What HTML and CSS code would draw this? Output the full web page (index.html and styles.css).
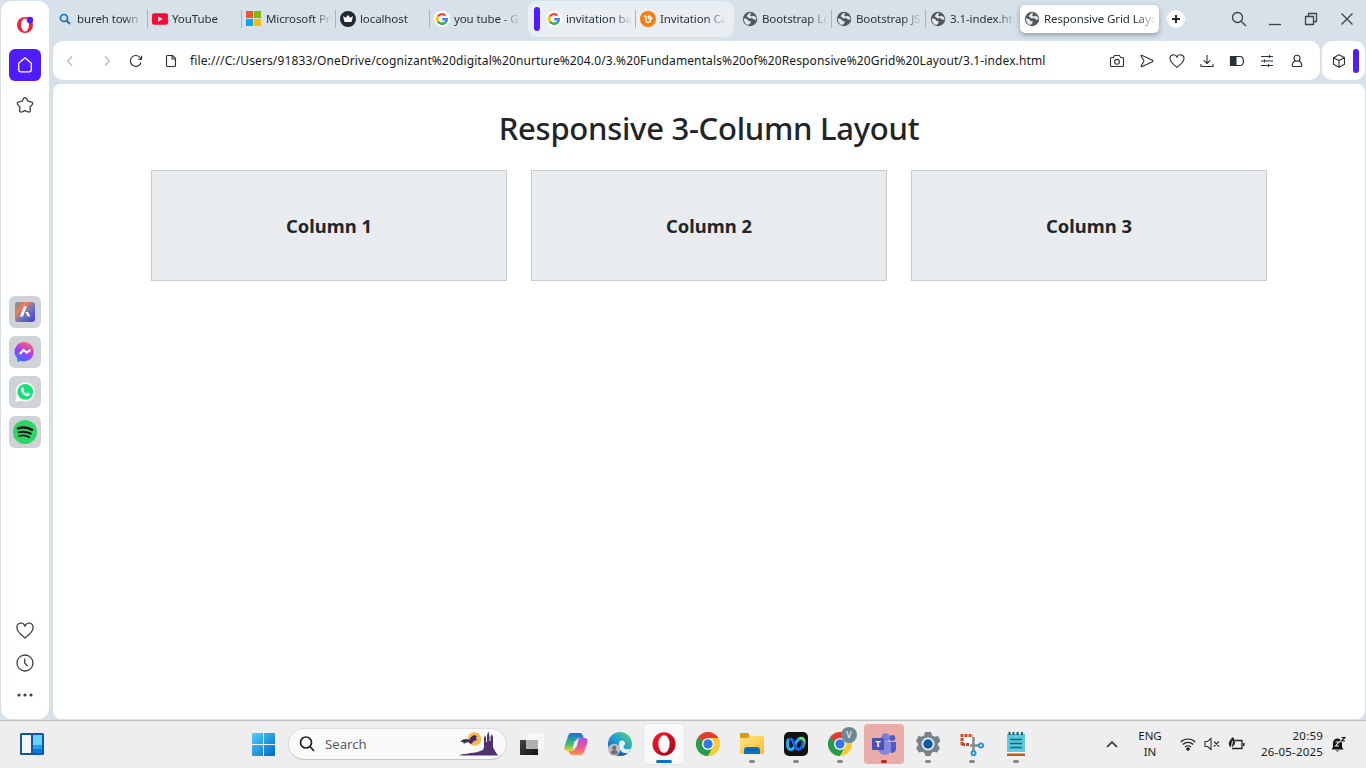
FILE: index.html
```html
<!DOCTYPE html>
<html lang="en">
<head>
<meta charset="utf-8">
<title>Responsive Grid Layout</title>
<link rel="stylesheet" href="styles.css">
</head>
<body>
<svg class="defs" aria-hidden="true">
  <defs>
    <linearGradient id="g-win" gradientUnits="userSpaceOnUse" x1="0" y1="0" x2="23" y2="23"><stop offset="0" stop-color="#4fd0fb"/><stop offset="1" stop-color="#0067c8"/></linearGradient>
    <linearGradient id="g-aria" x1="0" y1="0" x2="1" y2="1"><stop offset="0" stop-color="#5590b8"/><stop offset=".3" stop-color="#f27c55"/><stop offset=".6" stop-color="#6273c8"/><stop offset="1" stop-color="#5436c9"/></linearGradient>
    <linearGradient id="g-msg" x1="0.7" y1="0" x2="0.2" y2="1"><stop offset="0" stop-color="#ff6472"/><stop offset=".5" stop-color="#a63cf5"/><stop offset="1" stop-color="#1c80ff"/></linearGradient>
    <linearGradient id="g-opera" x1="0" y1="0" x2="1" y2="1"><stop offset="0" stop-color="#ff1b2d"/><stop offset="1" stop-color="#a70014"/></linearGradient>
    <linearGradient id="g-edge" x1="0" y1="1" x2="1" y2="0"><stop offset="0" stop-color="#0c59a4"/><stop offset=".5" stop-color="#1c9de0"/><stop offset="1" stop-color="#5fdc62"/></linearGradient>
    <linearGradient id="g-cop1" x1="0" y1="0" x2="0" y2="1"><stop offset="0" stop-color="#1670e8"/><stop offset=".6" stop-color="#3bbd72"/><stop offset="1" stop-color="#f3cf28"/></linearGradient>
    <linearGradient id="g-cop2" x1="0" y1="0" x2="0" y2="1"><stop offset="0" stop-color="#a850ec"/><stop offset=".6" stop-color="#f5568e"/><stop offset="1" stop-color="#fa9a4f"/></linearGradient>
    <linearGradient id="g-folder" x1="0" y1="0" x2="1" y2="1"><stop offset="0" stop-color="#ffe48a"/><stop offset="1" stop-color="#fbbd25"/></linearGradient>
    <linearGradient id="g-dark" x1="0" y1="0" x2="1" y2="1"><stop offset="0" stop-color="#444"/><stop offset="1" stop-color="#111"/></linearGradient>
    <symbol id="globe" viewBox="0 0 16 16"><circle cx="8" cy="8" r="7.2" fill="#55585b"/><path d="M1.8 7.2 5 8.1 6.5 10l2.2.3-.4 2.2-2.2 1.6C3.600 13.400 1.700 11 1.800 7.200zM7 2.200 9.300 1.800 8 4.200l1.600 1.200 2.200-.6 2.300 1.600.2 2.400-2.300-.4-2-1.300-2.400.4L6 6.200l-1.500-1z" fill="#e3eaef"/></symbol>
    <symbol id="google" viewBox="0 0 16 16"><circle cx="8" cy="8" r="8" fill="#fff"/><g fill="none" stroke-width="2.400"><path d="M3.900 5.400A4.900 4.900 0 0 1 11.500 4.500" stroke="#ea4335"/><path d="M3.900 5.400a4.900 4.900 0 0 0 0 5.200" stroke="#fbbc05"/><path d="M3.900 10.600a4.900 4.900 0 0 0 7.400.9" stroke="#34a853"/><path d="M11.300 11.500A4.900 4.900 0 0 0 12.900 8.200H8.200" stroke="#4285f4"/></g></symbol>
    <symbol id="chrome" viewBox="0 0 24 24"><path d="M12 12 1.600 6A12 12 0 0 1 22.400 6z" fill="#e33b2e"/><path d="M12 12 22.400 6A12 12 0 0 1 12 24z" fill="#fcc934"/><path d="M12 12v12A12 12 0 0 1 1.600 6z" fill="#259b4b"/><path d="M12 6h10.400L17 15z" fill="#fcc934"/><path d="M1.600 6 7 15.500 12 12z" fill="#259b4b"/><path d="M17.200 15 12 24 8 17z" fill="#259b4b"/><path d="M17.200 15 12 24l5.200-3z" fill="#fcc934"/><circle cx="12" cy="12" r="6" fill="#fff"/><circle cx="12" cy="12" r="4.700" fill="#3277e8"/></symbol>
  </defs>
</svg>

<div class="desktop">
  <div class="browser">
    <aside class="sidebar">
      <div class="side-item logo"><svg width="18" height="18" viewBox="0 0 18 18"><ellipse cx="9" cy="9" rx="8" ry="8" fill="#fa1e37"/><ellipse cx="9" cy="9" rx="4" ry="6.400" fill="#fff"/><circle cx="14" cy="4" r="3.200" fill="#4f1bff"/></svg></div>
      <div class="side-item home"><svg width="18" height="18" viewBox="0 0 18 18" class="line light"><path d="M2.700 7.200 9 1.800l6.300 5.400v6.600a2 2 0 0 1-2 2H4.700a2 2 0 0 1-2-2z"/></svg></div>
      <div class="side-item"><svg width="18" height="18" viewBox="0 0 18 18" class="line"><path d="M7.700 2.300q1.300-1.500 2.600 0l1.700 2.900 3.600.9q1.700.7.8 2.200L14.100 11l.3 3.600q-.1 1.700-1.900 1.500L9 14.600l-3.500 1.500q-1.800.2-1.900-1.500l.3-3.600-2.300-2.700q-.9-1.500.8-2.200l3.600-.9z"/></svg></div>
      <div class="side-apps">
        <div class="app"><svg width="20" height="20" viewBox="0 0 20 20"><rect width="20" height="20" rx="3" fill="url(#g-aria)"/><path d="M9 4.200h2.800L7.900 14.500H4.800zM10.500 10h2.600l2.200 4.500h-2.700z" fill="#fff"/></svg></div>
        <div class="app"><svg width="22" height="22" viewBox="0 0 22 22"><path d="M11 1a9.700 9.700 0 1 1-4.500 18.700L3.500 21.200l-.2-3.600A9.800 9.800 0 0 1 11 1z" fill="url(#g-msg)"/><path d="m5.800 13 3.700-4 3.200 2.600L16.300 8.800" fill="none" stroke="#fff" stroke-width="2.200"/></svg></div>
        <div class="app"><svg width="22" height="22" viewBox="0 0 22 22"><path d="M1.200 21 2.700 15.600A9.700 9.700 0 1 1 7 19.700z" fill="#fff"/><circle cx="11.300" cy="10.800" r="7.900" fill="#18e07a"/><path d="M7 7.200c.8-1.500 2-1.200 2.300-.2l.7 1.700-.8 1.100c.8 1.500 1.800 2.300 3.200 2.900l1.100-1.200 2.200 1.100c.4 1.900-1.400 2.800-2.900 2.500C9.500 14.300 6.700 11 7 7.200z" fill="#fff"/></svg></div>
        <div class="app"><svg width="24" height="24" viewBox="0 0 24 24"><circle cx="12" cy="12" r="12" fill="#2bd566"/><g fill="none" stroke="#111" stroke-linecap="round"><path d="M5 8.400c4.700-1.400 9.900-.9 14 1.400" stroke-width="2.500"/><path d="M5.700 12.300c4.200-1.200 8.600-.6 12 1.400" stroke-width="2"/><path d="M6.200 15.900c3.700-1 7.200-.5 10.100 1.300" stroke-width="1.700"/></g></svg></div>
      </div>
      <div class="side-foot">
        <svg width="18" height="18" viewBox="0 0 18 18" class="line"><path d="M9 16C5.500 13.200 1 10 1 6a4 4 0 0 1 8-1.700A4 4 0 0 1 17 6c0 4-4.500 7.200-8 10z"/></svg>
        <svg width="18" height="18" viewBox="0 0 18 18" class="line"><circle cx="9" cy="9" r="8"/><path d="M8.700 4.500V9l3 3"/></svg>
        <svg width="18" height="18" viewBox="0 0 18 18" fill="#3b444b"><circle cx="3" cy="9" r="1.600"/><circle cx="9" cy="9" r="1.600"/><circle cx="15" cy="9" r="1.600"/></svg>
      </div>
    </aside>

    <div class="main">
      <header class="tabs">
        <div class="tab first sep"><svg class="ico" viewBox="0 0 16 16" fill="none" stroke="#1570c9"><circle cx="7" cy="7" r="3.500" stroke-width="1.700"/><path d="m9.500 9.500 3.500 3.500" stroke-width="2"/></svg><span class="label">bureh town s</span></div>
        <div class="tab sep"><svg class="ico" viewBox="0 0 16 16"><rect y="2.300" width="16" height="11.500" rx="2" fill="#fb0a38"/><path d="m6.200 5.600 4.500 2.500-4.500 2.500z" fill="#fff"/></svg><span class="label">YouTube</span></div>
        <div class="tab sep"><svg class="ico" viewBox="0 0 16 16"><path fill="#f35426" d="M0 0h7v7H0z"/><path fill="#80bb04" d="M8 0h7v7H8z"/><path fill="#05a5f0" d="M0 8h7v7H0z"/><path fill="#ffba06" d="M8 8h7v7H8z"/></svg><span class="label">Microsoft Pr</span></div>
        <div class="tab sep"><svg class="ico" viewBox="0 0 16 16"><circle cx="8" cy="8" r="8" fill="#252533"/><path d="m3 5 2.800 1.800L8 4l2.200 2.800L13 5l-1.500 6h-7z" fill="#fff"/></svg><span class="label">localhost</span></div>
        <div class="tab wide"><svg class="ico"><use href="#google"/></svg><span class="label">you tube - G</span></div>
        <div class="tab-group">
          <i class="group-mark"></i>
          <div class="tab sep"><svg class="ico"><use href="#google"/></svg><span class="label">invitation ba</span></div>
          <div class="tab"><svg class="ico" viewBox="0 0 16 16"><circle cx="8" cy="8" r="8" fill="#fb7a08"/><path d="M4 5.500c1.500-1 2 0 2 1.500v2.500c0 3 4.500 3 4.800-1.500.2-3.500-2.600-4-2.600-2s2 2 4.300 1.300" fill="none" stroke="#fff" stroke-width="1.500"/></svg><span class="label">Invitation Ca</span></div>
        </div>
        <div class="tab sep"><svg class="ico"><use href="#globe"/></svg><span class="label">Bootstrap Lo</span></div>
        <div class="tab sep"><svg class="ico"><use href="#globe"/></svg><span class="label">Bootstrap JS</span></div>
        <div class="tab"><svg class="ico"><use href="#globe"/></svg><span class="label">3.1-index.htm</span></div>
        <div class="tab active"><svg class="ico"><use href="#globe"/></svg><span class="label">Responsive Grid Layou</span></div>
        <svg class="plus" width="18" height="18" viewBox="0 0 18 18"><circle cx="9" cy="9" r="9" fill="#fff"/><path d="M9 5v8M5 9h8" stroke="#222b33" stroke-width="2"/></svg>
        <div class="win-controls">
          <svg width="16" height="16" viewBox="0 0 16 16" class="line"><circle cx="6.500" cy="6.500" r="5"/><path d="m10.200 10.200 4.800 4.800"/></svg>
          <svg width="16" height="16" viewBox="0 0 16 16" class="line"><path d="M2 13.500h12"/></svg>
          <svg width="16" height="16" viewBox="0 0 16 16" class="line"><path d="M2.500 5.500h8v8h-8zM5.500 5.500v-3h8v8h-3"/></svg>
          <svg width="16" height="16" viewBox="0 0 16 16" class="line"><path d="m2.500 2.500 11 11m0-11-11 11"/></svg>
        </div>
      </header>

      <div class="toolbar">
        <div class="address">
          <svg class="t16 dim" viewBox="0 0 16 16"><path d="M10 3.500 5.500 8l4.500 4.500"/></svg>
          <svg class="t16 dim fwd" viewBox="0 0 16 16"><path d="m6 3.500 4.500 4.500L6 12.500"/></svg>
          <svg class="t16 reload" viewBox="0 0 16 16"><path d="M13 9.500A5.400 5.400 0 1 1 11.700 4.200L13.300 6M13.600 2.700v3.600H10"/></svg>
          <svg class="t16 file" viewBox="0 0 16 16"><path d="M3.500 3.500a1 1 0 0 1 1-1h5l3 3v7a1 1 0 0 1-1 1h-7a1 1 0 0 1-1-1zM9 2.500V6h3.500"/></svg>
          <span class="url">file:///C:/Users/91833/OneDrive/cognizant%20digital%20nurture%204.0/3.%20Fundamentals%20of%20Responsive%20Grid%20Layout/3.1-index.html</span>
          <div class="actions">
            <svg class="t16" viewBox="0 0 16 16"><path d="M2.500 4.500h2l1-2h5l1 2h2a1 1 0 0 1 1 1v7a1 1 0 0 1-1 1h-11a1 1 0 0 1-1-1v-7a1 1 0 0 1 1-1z"/><circle cx="8" cy="8.800" r="2.400"/></svg>
            <svg class="t16" viewBox="0 0 16 16"><path d="M2.200 3.300q-.3-1.200 1-.8L13.500 7.300q1 .7 0 1.400L3.200 13.500q-1.300.4-1-.8L5 8z"/></svg>
            <svg class="t16" viewBox="0 0 16 16"><path d="M8 14.300C5 11.800 1 9.300 1 5.500A3.600 3.600 0 0 1 8 4.200a3.600 3.600 0 0 1 7 1.300c0 3.800-4 6.300-7 8.800z"/></svg>
            <svg class="t16" viewBox="0 0 16 16"><path d="M8 2v8.500M4.800 7.300 8 10.500l3.200-3.200M2 11v2.500h12V11"/></svg>
            <svg class="t16" viewBox="0 0 16 16"><path d="M1.500 3.500H12q2.500 1 2.500 4.500T12 12.500H1.500z"/><path d="M1.500 3.500H7v9H1.500z" fill="#28323a"/></svg>
            <svg class="t16" viewBox="0 0 16 16"><path d="M2 3.500h12M2 8h12M2 12.500h12M10.500 2v3M5.500 6.500v3M9.500 11v3"/></svg>
            <svg class="t16" viewBox="0 0 16 16"><circle cx="8" cy="5.300" r="3"/><path d="M6 8C3.500 9 3.200 11 3.200 12.500q0 1 1 1h7.600q1 0 1-1C12.800 11 12.500 9 10 8"/></svg>
          </div>
        </div>
        <div class="extension">
          <svg class="t16" viewBox="0 0 16 16"><path d="M8 1.800 13.500 4.700v6.600L8 14.200l-5.500-2.900V4.700zM2.500 4.700 8 7.600l5.500-2.900M8 7.600v6.600"/></svg>
          <i class="group-mark"></i>
        </div>
      </div>

      <main class="page">
        <h1>Responsive 3-Column Layout</h1>
        <div class="columns">
          <div class="column">Column 1</div>
          <div class="column">Column 2</div>
          <div class="column">Column 3</div>
        </div>
      </main>
    </div>
  </div>

  <footer class="taskbar">
    <div class="widgets"><svg width="24" height="22" viewBox="0 0 24 22"><rect width="24" height="22" rx="1.500" fill="#1256a0"/><path fill="#f5f5f5" d="M2 2h9v18H2z"/><path fill="#65d3fb" d="M13 2h9v10h-9z"/><path fill="#239ff2" d="M13 12h9v4h-9z"/><path fill="#057be2" d="M13 16h9v4h-9z"/></svg></div>
    <div class="start"><svg width="23" height="23" viewBox="0 0 23 23" fill="url(#g-win)"><path d="M0 1q0-1 1-1h10v11H0zM12 0h10q1 0 1 1v10H12zM0 12h11v11H1q-1 0-1-1zM12 12h11v10q0 1-1 1H12z"/></svg></div>
    <div class="search">
      <svg width="16" height="16" viewBox="0 0 16 16" fill="none" stroke="#222" stroke-width="1.700"><circle cx="7" cy="6.500" r="5.500"/><path d="m11 10.500 4 4.500"/></svg>
      <span>Search</span>
      <svg class="castle" width="40" height="26" viewBox="0 0 40 26"><circle cx="15.500" cy="8" r="6.800" fill="#f9b950"/><path d="M1 11l3-2.500 4-.5 2 1 2-3 3-2 3 1-1 2 1 2-3 1-3 3-3-2-3 1-1 1-1-2z" fill="#442a64"/><path d="M0 24.500c3-2 7-1 11-2.500 5 0 8-1 13-3l1-3V7l1-3 1 3v4h1V5l1.200-5L30.500 5v5h1V6l1.500-3L34 6v10l2 4 3 4.500z" fill="#52316f"/></svg>
    </div>
    <div class="apps">
      <div class="task"><svg viewBox="0 0 24 24"><path d="M0 8h18v15H0z" fill="url(#g-dark)"/><path d="M6 2h18v15H6z" fill="#f8f8f8" opacity=".94"/><path d="M6 8h12v9H6z" fill="#b0b0b0"/></svg></div>
      <div class="task"><svg viewBox="0 0 24 24"><path d="M7.500 1h8.300c2 0 2.700 1.500 3.200 3l.8 2h-4.500c-2 0-2.500 1-3 3l-2 7c-.7 2.400-2 3-4.300 3H3.500C0 19 0 16 1 13L4 4c.7-2 1.500-3 3.500-3z" fill="url(#g-cop1)"/><path d="M16.500 23H8.200c-2 0-2.700-1.500-3.200-3l-.3-1h3c2 0 3-1 3.500-3l2-7c.7-2.400 2-3 4.300-3h3C24 6 24 9 23 12l-3 8c-.7 2-1.500 3-3.500 3z" fill="url(#g-cop2)"/><path d="m10.500 9.500 2-1.500h2l-2 7-2 1.500h-2z" fill="#eee"/></svg></div>
      <div class="task"><svg viewBox="0 0 24 24"><circle cx="12" cy="12" r="12" fill="url(#g-edge)"/><path d="M11 13c-1-5 5-6 6-2 .4 2-1.500 2-1.500 4 0 2.500 5 3 7.500 1.500L20 21c-5 1.500-9-3-9-8z" fill="#eef1f3"/><path d="M9 11c-2 6 3 12 11 10-5 4-10 3-13 1z" fill="#1260b2"/><circle cx="6.200" cy="17.800" r="6" fill="#c0c0c0"/><circle cx="6.200" cy="15.800" r="2.200" fill="#707070"/><path d="M2.500 21c0-4 7.400-4 7.400 0-2 2-5.400 2-7.400 0z" fill="#707070"/></svg></div>
      <div class="task current"><svg viewBox="0 0 24 24"><ellipse cx="12" cy="12" rx="11.500" ry="11.800" fill="url(#g-opera)"/><ellipse cx="12" cy="12" rx="5.700" ry="9" fill="#f8f8f8"/></svg></div>
      <div class="task"><svg><use href="#chrome"/></svg></div>
      <div class="task open"><svg viewBox="0 0 24 24"><path d="M0 2q0-1 1-1h7l2 3v4H0z" fill="#d99b09"/><path d="M0 6h8l2-2h14v18H0z" fill="url(#g-folder)"/><path d="M4 22v-4q0-3 3-3h10q3 0 3 3v4z" fill="#0a75c8"/><path d="M7 18h10" stroke="#0c5c9c" stroke-width="1.500"/></svg></div>
      <div class="task open"><svg viewBox="0 0 24 24"><rect width="24" height="24" rx="5" fill="#111"/><g fill="none" stroke-width="3" stroke-linecap="round"><path d="M15 6.800c5-2.500 6.500 3 3.500 8" stroke="#68df71"/><path d="M4 8c-1.500 6 0 9.500 3 9.500 4.500 0 4-9.500 8-10" stroke="#18b4f2"/><path d="M6.500 7c4 0 3 10.500 8 10.500 2.500 0 4.500-4 4.500-7" stroke="#1d62ee"/></g></svg></div>
      <div class="task open"><svg><use href="#chrome"/></svg><b class="badge">V</b></div>
      <div class="task open alert"><svg viewBox="0 0 24 24"><circle cx="13.500" cy="5.500" r="4.300" fill="#777fd9"/><circle cx="20.300" cy="6" r="3" fill="#525bc0"/><path d="M15 10h9v7c0 3-3 4-5 4z" fill="#5059c9"/><path d="M6 10h13v7c0 7-11 8-13 1z" fill="#8188dd"/><rect y="6" width="12" height="12" rx="1" fill="#4650b5"/><text x="6" y="15.300" text-anchor="middle" class="tee">T</text></svg></div>
      <div class="task open"><svg viewBox="0 0 24 24"><path d="M9 0h6l1 3.300 2.500 1.400L22 4l2.500 5-2.500 2.500v2L24 16l-3 4.500-3.500-.8-2 1.300-1 3h-5l-1-3-2-1.300-3.500.8L0 16l2-2.500v-2L0 9l2.500-5 3.300.7L8.200 3.300z" fill="#77838b"/><circle cx="12" cy="12" r="6.500" fill="#eceff1"/><circle cx="12" cy="12" r="4.700" fill="#105ba7"/></svg></div>
      <div class="task open"><svg viewBox="0 0 24 24"><path d="M4 2h12v11H4z" fill="#fff"/><path d="M2 13V3.500h11" fill="none" stroke="#d54720" stroke-width="3" stroke-dasharray="3 1"/><path d="M2 12.500h8" stroke="#d54720" stroke-width="3" stroke-dasharray="3 1"/><path d="M13.500 5v14M10 13.500h10" stroke="#858b90" stroke-width="2.600"/><g fill="#fff" stroke="#2099dc" stroke-width="2"><circle cx="21" cy="13.500" r="2"/><circle cx="13.500" cy="21.300" r="2"/></g></svg></div>
      <div class="task open"><svg viewBox="0 0 24 24"><path d="M3 2h18v19H3z" fill="#5bc9df"/><path d="M3 21h18v3H3z" fill="#bd5a17"/><path d="M3 20h18v1.500H3z" fill="#f7f7f7"/><path d="M6 7.500h12M6 11.500h12M6 15.500h12" stroke="#176b7d" stroke-width="1.500"/><path d="M5.500 0v3M9.500 0v3M13.500 0v3M18 0v3" stroke="#124f5c" stroke-width="1.800"/></svg></div>
    </div>
    <div class="tray">
      <svg class="up" width="12" height="8" viewBox="0 0 12 8" fill="none" stroke="#222" stroke-width="1.500"><path d="m1 7 5-5 5 5"/></svg>
      <div class="lang">ENG<br>IN</div>
      <div class="status">
        <svg width="16" height="14" viewBox="0 0 16 14" fill="none" stroke="#222" stroke-width="1.200"><path d="M.7 5a10.400 10.400 0 0 1 14.600 0M2.800 7.500a7.300 7.300 0 0 1 10.400 0M5 10a4.200 4.200 0 0 1 6 0"/><circle cx="8" cy="12" r="1.200" fill="#222"/></svg>
        <svg width="16" height="14" viewBox="0 0 16 14" fill="none" stroke="#333" stroke-width="1.100"><path d="M1 4.500h2.500L7 1.500v11L3.500 9.500H1zM10 4.500l5 5m0-5-5 5"/></svg>
        <svg width="17" height="14" viewBox="0 0 17 14"><path d="M7 3.500h7v8H4" fill="none" stroke="#222" stroke-width="1.300"/><path d="M15 6h1.500v3H15zM5 0c2 3 3 6 .5 9L3 10.500C-.5 8 0 4.500 5 0z" fill="#222"/><path d="M4.500 4 3 12" stroke="#eee"/></svg>
      </div>
      <div class="clock">20:59<br>26-05-2025</div>
      <svg class="bell" width="15" height="16" viewBox="0 0 15 16"><path d="M2 11V7c0-6 9-6 9 0v4l1.500 2.500H.5zM4.500 14.500h4q-2 2-4 0z" fill="#111"/><g fill="none" stroke-width="1.100"><path d="M4.500 6h3.500l-3.500 4h3.500" stroke="#eee"/><path d="M10.500 1.500H14l-3.500 3.500H14" stroke="#eee" stroke-width="2.500"/><path d="M10.500 1.500H14l-3.500 3.500H14" stroke="#111"/></g></svg>
    </div>
  </footer>
</div>
</body>
</html>
```
FILE: styles.css
```css
* { box-sizing: border-box; }

body {
  margin: 0;
  overflow: hidden;
  font-family: "Noto Sans", "Open Sans", sans-serif;
  color: #212529;
}

svg { display: block; flex: none; }
.defs { position: absolute; width: 0; height: 0; }

.desktop { width: 1366px; height: 768px; display: flex; flex-direction: column; }

.browser {
  height: 720px;
  display: flex;
  gap: 4px;
  padding: 1px 1px 1px;
  background: #d7e1ea;
}

.line { fill: none; stroke: #3b444b; stroke-width: 1.3; stroke-linejoin: round; }
.line.light { stroke: #fff; }

.sidebar {
  width: 48px;
  padding: 8px 8px 15px;
  border-radius: 10px;
  background: #fff;
  display: flex;
  flex-direction: column;
  align-items: center;
}

.side-item { width: 32px; height: 32px; margin-bottom: 8px; display: grid; place-items: center; border-radius: 6px; }
.home { background: #4f1bff; }
.side-apps { margin-top: 167px; display: grid; gap: 8px; }
.app { width: 32px; height: 32px; border-radius: 6px; background: #cfd3d8; display: grid; place-items: center; }
.side-foot { margin-top: auto; display: grid; gap: 14px; }

.main { flex: 1; min-width: 0; display: flex; flex-direction: column; }

.tabs { height: 40px; display: flex; align-items: flex-start; }
.tab {
  width: 94px;
  height: 26px;
  margin-top: 5px;
  padding-left: 4px;
  display: flex;
  align-items: center;
  gap: 4px;
  position: relative;
}
.tab.first { width: 95px; }
.tab.wide { width: 98px; }
.tab.sep::after { content: ""; position: absolute; right: 0; top: 4px; width: 1px; height: 18px; background: #a9b4bc; }
.ico { width: 16px; height: 16px; }
.label {
  width: 67px;
  overflow: hidden;
  white-space: nowrap;
  font-size: 11.5px;
  line-height: 20px;
  letter-spacing: -0.1px;
  color: #28323a;
  -webkit-mask-image: linear-gradient(90deg, #000 47px, transparent 66px);
  mask-image: linear-gradient(90deg, #000 47px, transparent 66px);
}
.tab-group {
  width: 206px;
  height: 36px;
  margin-right: 4px;
  padding-left: 6px;
  border-radius: 9px;
  background: #e9eef3;
  display: flex;
}
.group-mark { width: 6px; height: 24px; margin-top: 6px; border-radius: 3px; background: #4f1bff; }
.tab-group .group-mark { margin-right: 2px; }
.tab.active {
  width: 139px;
  height: 28px;
  margin-top: 4px;
  border-radius: 5px;
  background: #fff;
  box-shadow: 0 2px 5px rgba(30, 50, 70, .4);
}
.active .label {
  width: 111px;
  -webkit-mask-image: linear-gradient(90deg, #000 92px, transparent 112px);
  mask-image: linear-gradient(90deg, #000 92px, transparent 112px);
}
.plus { margin: 9px 0 0 8px; }
.win-controls { margin: 10px 10px 0 auto; display: flex; gap: 20px; }

.toolbar { height: 39px; display: flex; gap: 2px; }
.address {
  width: 1267px;
  padding-left: 9px;
  border-radius: 10px;
  background: #fff;
  display: flex;
  align-items: center;
}
.t16 { width: 16px; height: 16px; fill: none; stroke: #28323a; stroke-width: 1.1; stroke-linejoin: round; }
.t16.dim { stroke: #b3b8bc; }
.fwd { margin-left: 21px; }
.reload { margin-left: 13px; }
.file { margin-left: 19px; }
.url { margin-left: 11px; font-size: 12px; line-height: 18px; letter-spacing: 0.12px; white-space: nowrap; color: #15191d; }
.actions { margin-left: auto; margin-right: 15px; display: flex; gap: 14px; }
.extension { flex: 1; padding-left: 9px; border-radius: 10px; background: #fff; display: flex; align-items: center; gap: 6px; }
.extension .group-mark { margin: 0; }

.page {
  flex: 1;
  margin-top: 4px;
  padding: 25px 98px 0;
  border-radius: 8px;
  background: #fff;
}
h1 { margin: 0 0 23px; font-size: 31px; line-height: 38px; font-weight: 500; letter-spacing: -0.27px; text-align: center; }
.columns { display: grid; grid-template-columns: repeat(3, 356px); gap: 24px; }
.column {
  height: 111px;
  border: 1px solid #c9cbcd;
  background: #e9ecef;
  display: grid;
  place-items: center;
  font-size: 18.4px;
  font-weight: 700;
}

.taskbar {
  height: 48px;
  padding-bottom: 1px;
  border-top: 1px solid #bdbfc1;
  background: #eee;
  display: flex;
  align-items: center;
}
.widgets { margin-left: 20px; }
.start { margin-left: 208px; }
.search {
  width: 219px;
  height: 32px;
  flex: none;
  margin-left: 13px;
  padding: 0 7px 0 10px;
  border: 1px solid #ddd;
  border-bottom-color: #c5c5c5;
  border-radius: 16px;
  background: #fafafa;
  display: flex;
  align-items: center;
  gap: 10px;
  font-size: 13.2px;
  color: #5d5d5d;
}
.castle { margin-left: auto; }
.apps { margin-left: 5px; display: flex; gap: 4px; }
.task { width: 40px; height: 40px; border-radius: 4px; display: grid; place-items: center; position: relative; }
.task svg { width: 24px; height: 24px; }
.task.open::after, .task.current::after {
  content: "";
  position: absolute;
  left: 17px;
  bottom: 1px;
  width: 6px;
  height: 3px;
  border-radius: 2px;
  background: #888;
}
.task.current { background: #f8f8f8; box-shadow: 0 0 0 1px #e5e5e5; }
.task.current::after { left: 12px; width: 16px; background: #0872ce; }
.task.alert { background: #eaaca8; }
.task.alert::after { background: #c42b1c; }
.badge {
  position: absolute;
  left: 21px;
  top: 3px;
  width: 16px;
  height: 16px;
  border-radius: 50%;
  background: #6f8791;
  color: #fff;
  font-size: 9px;
  line-height: 16px;
  text-align: center;
  font-weight: 400;
}
.tee { font-size: 9px; font-weight: 700; fill: #fff; }

.tray { flex: 1; display: flex; align-items: center; font-size: 11.5px; line-height: 16px; color: #1b1b1b; }
.up { margin-left: 70px; }
.lang { width: 30px; margin-left: 17px; text-align: center; }
.status { margin-left: 15px; display: flex; gap: 8px; }
.clock { width: 70px; margin-left: 8px; text-align: right; white-space: nowrap; letter-spacing: 0.2px; }
.bell { margin-left: 8px; }
```
